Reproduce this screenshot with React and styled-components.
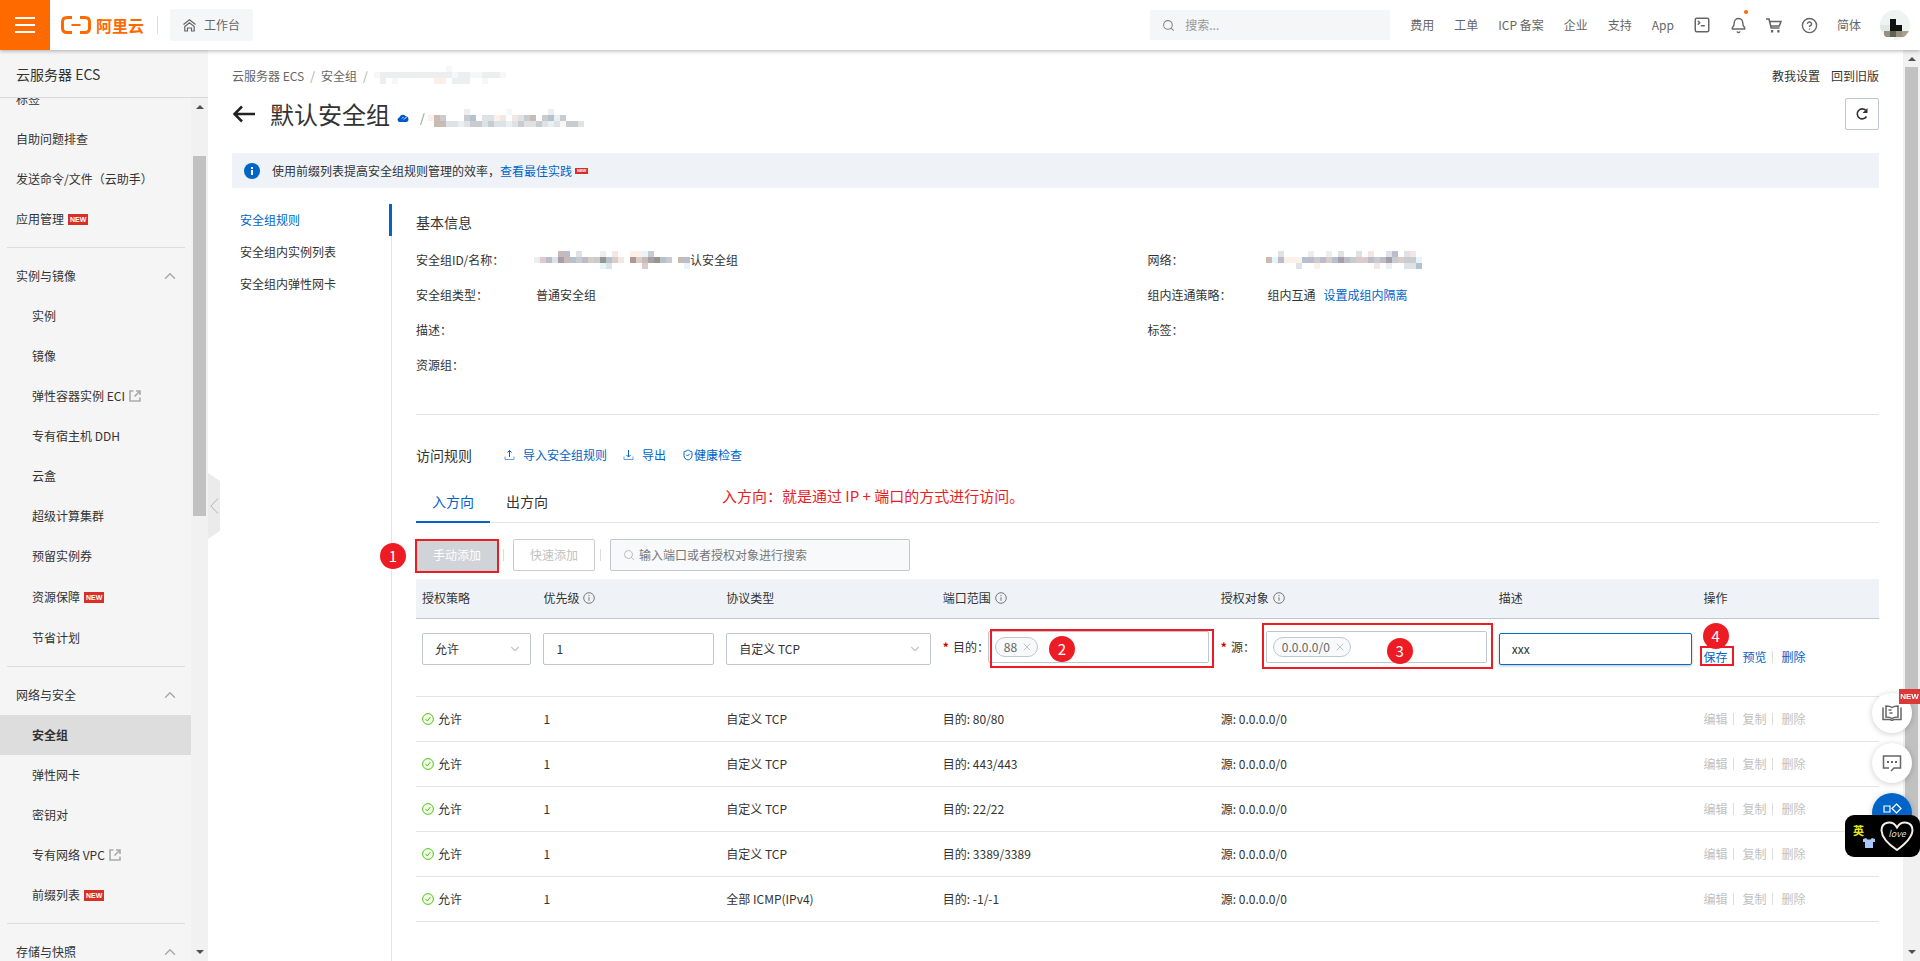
import { useState } from "react";
import styled, { createGlobalStyle } from "styled-components";
import {
  Bell,
  CircleHelp,
  Search,
  SquareTerminal,
  ChevronUp,
  ChevronDown,
  ShieldCheck,
  X,
} from "lucide-react";

const GlobalStyle = createGlobalStyle`
  * {
    box-sizing: border-box;
  }
  body {
    margin: 0;
    background-color: white;
    color: #333;
    font-family: "Noto Sans CJK SC", "Noto Sans", sans-serif;
    font-size: 12px;
    line-height: 20px;
  }
  a {
    color: inherit;
    text-decoration: none;
  }
  ul {
    list-style: none;
    margin: 0;
    padding: 0;
  }
  button, input, select {
    font: inherit;
    color: inherit;
    margin: 0;
  }
  button {
    cursor: pointer;
  }
  svg {
    display: block;
    flex: none;
  }
`;

const Page = styled.div`
  height: 100vh;
  display: flex;
  flex-direction: column;
  overflow: hidden;
`;

/* ---------- header ---------- */

const Header = styled.header`
  height: 50px;
  flex: none;
  display: flex;
  align-items: center;
  background-color: white;
  box-shadow: 0 1px 4px rgba(0, 0, 0, 0.3);
  z-index: 2;
`;

const MenuButton = styled.button`
  width: 50px;
  height: 50px;
  border: none;
  padding: 15px;
  background-color: #ff6a00;
`;

const Logo = styled.a`
  display: flex;
  align-items: center;
  gap: 5px;
  margin-left: 11px;
  color: #ff6a00;
  font-size: 16px;
  font-weight: 700;
`;

const HeaderDivider = styled.span`
  width: 1px;
  height: 18px;
  margin: 0 12px 0 13px;
  background-color: #ddd;
`;

const Workbench = styled.button`
  display: flex;
  align-items: center;
  gap: 8px;
  height: 32px;
  padding: 0 13px;
  border: none;
  border-radius: 2px;
  background-color: #f4f6f8;
  color: #666;
`;

const HeaderRight = styled.div`
  margin-left: auto;
  margin-right: 10px;
  display: flex;
  align-items: center;
  color: #666;
`;

const SearchBox = styled.label`
  display: flex;
  align-items: center;
  gap: 10px;
  width: 240px;
  height: 30px;
  padding: 0 12px;
  margin-right: 20px;
  background-color: #f4f6f8;
  color: #888;
`;

const PlainInput = styled.input`
  flex: 1;
  min-width: 0;
  border: none;
  padding: 0;
  outline: none;
  background: transparent;
  &::placeholder {
    color: ${(props) => props.$hint || "#999"};
    opacity: 1;
  }
`;

const HeaderNav = styled.nav`
  display: flex;
  align-items: center;
  gap: 19px;
`;

const TextLinks = styled.div`
  display: flex;
  gap: 20px;
`;

const IconLink = styled.a`
  position: relative;
  display: flex;
`;

const Dot = styled.span`
  position: absolute;
  top: -7px;
  right: -1px;
  width: 4px;
  height: 4px;
  border-radius: 50%;
  background-color: #ff6a00;
`;

const Avatar = styled.svg`
  width: 30px;
  height: 30px;
  border-radius: 50%;
`;

/* ---------- sidebar ---------- */

const Body = styled.div`
  flex: 1;
  min-height: 0;
  display: flex;
`;

const Sidebar = styled.aside`
  position: relative;
  width: 208px;
  flex: none;
  display: flex;
  flex-direction: column;
  background-color: #f5f5f5;
`;

const SidebarTitle = styled.h2`
  height: 48px;
  flex: none;
  margin: 0;
  padding: 14px 16px;
  border-bottom: 1px solid #d9d9d9;
  font-size: 14px;
  font-weight: 400;
`;

const SidebarScroll = styled.div`
  flex: 1;
  min-height: 0;
  display: flex;
`;

const MenuList = styled.nav`
  flex: 1;
  overflow: hidden;
`;

const MenuGroup = styled.ul`
  margin-bottom: 8px;
  &:first-child {
    margin-top: -19px;
  }
`;

const MenuItem = styled.a`
  display: flex;
  align-items: center;
  gap: 4px;
  height: ${(props) => (props.$tall ? "42px" : "40px")};
  padding-left: ${(props) => (props.$nested ? "32px" : "16px")};
  font-weight: ${(props) => (props.$active ? "700" : "400")};
  background-color: ${(props) => (props.$active ? "#ddd" : "transparent")};
`;

const GroupButton = styled.button`
  display: flex;
  align-items: center;
  justify-content: space-between;
  width: 100%;
  height: 40px;
  padding: 0 12px 0 16px;
  border: none;
  background: transparent;
`;

const MenuLine = styled.hr`
  height: 1px;
  margin: 0 6px 8px 7px;
  border: none;
  background-color: #ddd;
`;

const NewTag = styled.span`
  padding: 0 2px;
  background-color: #d93026;
  color: white;
  font-family: "Liberation Sans", sans-serif;
  font-size: ${(props) => (props.$mini ? "4px" : "7px")};
  font-weight: 700;
  line-height: ${(props) => (props.$mini ? "6px" : "11px")};
`;

const ScrollTrack = styled.div`
  width: 17px;
  flex: none;
  display: flex;
  flex-direction: column;
  align-items: center;
  padding: 7px 0;
  background-color: #f1f1f1;
`;

const ScrollArrow = styled.span`
  border: 4px solid transparent;
  border-top-width: ${(props) => (props.$up ? "0" : "4px")};
  border-bottom-width: ${(props) => (props.$up ? "4px" : "0")};
  border-top-color: #505050;
  border-bottom-color: #505050;
`;

const ScrollThumb = styled.span`
  width: 13px;
  margin-bottom: auto;
  background-color: #c1c1c1;
`;

const CollapseHandle = styled.button`
  position: absolute;
  left: 100%;
  top: 423px;
  width: 12px;
  height: 66px;
  padding: 0 2px;
  border: none;
  background-color: #ebebeb;
  clip-path: polygon(0 0, 100% 8px, 100% 58px, 0 100%);
`;

/* ---------- main ---------- */

const Main = styled.main`
  flex: 1;
  min-width: 0;
  display: flex;
  flex-direction: column;
  padding: 16px 24px 0;
  overflow: hidden;
`;

const TopLine = styled.div`
  display: flex;
  justify-content: space-between;
`;

const Breadcrumb = styled.nav`
  display: flex;
  gap: 6px;
  color: #666;
`;

const Slash = styled.span`
  color: #aaa;
`;

const TopLinks = styled.div`
  display: flex;
  gap: 11px;
`;

const TitleRow = styled.div`
  display: flex;
  align-items: center;
  height: 36px;
  margin-top: 10px;
`;

const BackLink = styled.a`
  margin-right: 14px;
`;

const Title = styled.h1`
  margin: 0;
  font-size: 24px;
  font-weight: 400;
  line-height: 36px;
`;

const TitleMeta = styled.div`
  display: flex;
  align-items: center;
  gap: 3px;
  padding-top: 8px;
  margin-left: 7px;
  color: #888;
`;

const MetaSlash = styled.span`
  margin-left: 8px;
`;

const RefreshButton = styled.button`
  display: flex;
  align-items: center;
  justify-content: center;
  width: 34px;
  height: 32px;
  margin-left: auto;
  padding: 0;
  border: 1px solid #c0c6cc;
  border-radius: 2px;
  background-color: white;
`;

const Notice = styled.div`
  display: flex;
  align-items: center;
  flex: none;
  height: 35px;
  margin-top: 21px;
  padding: 0 12px;
  background-color: #eff3f8;
`;

const NoticeText = styled.span`
  margin: 0 3px 0 12px;
`;

const BlueLink = styled.a`
  display: inline-flex;
  align-items: center;
  gap: ${(props) => props.$gap || "0"};
  color: #0064c8;
`;

const Content = styled.div`
  flex: 1;
  display: flex;
  padding-top: 16px;
`;

const SideTabs = styled.nav`
  width: 160px;
  flex: none;
  border-right: 1px solid #e3e4e6;
`;

const SideTab = styled.a`
  display: block;
  height: 32px;
  margin-right: -1px;
  padding: 7px 8px;
  line-height: 18px;
  color: ${(props) => (props.$active ? "#0064c8" : "#333")};
  border-right: ${(props) => props.$active && "3px solid #0064c8"};
`;

const Panel = styled.section`
  flex: 1;
  min-width: 0;
  padding: 8px 0 0 24px;
`;

const SectionTitle = styled.h3`
  margin: 0;
  font-size: 14px;
  font-weight: 400;
  line-height: 20px;
`;

const InfoGrid = styled.dl`
  display: grid;
  grid-template-columns: 1fr 1fr;
  grid-auto-rows: 35px;
  margin: 10px 0 32px;
  align-items: center;
`;

const InfoItem = styled.div`
  display: flex;
`;

const InfoLabel = styled.dt`
  width: 120px;
  flex: none;
`;

const InfoValue = styled.dd`
  display: flex;
  align-items: center;
  gap: 8px;
  margin: 0;
`;

const Redacted = styled.span`
  display: flex;
  align-items: center;
  margin-left: -2px;
`;

const RuleSection = styled.div`
  padding-top: 29px;
  border-top: 1px solid #e3e4e6;
`;

const RuleHead = styled.div`
  display: flex;
  align-items: center;
  height: 21px;
`;

const RuleLinks = styled.div`
  display: flex;
  gap: 16px;
  margin-left: 32px;
`;

const Tabs = styled.div`
  position: relative;
  display: flex;
  height: 42px;
  margin-top: 16px;
  border-bottom: 1px solid #e3e4e6;
`;

const Tab = styled.button`
  height: 42px;
  padding: 0 16px;
  border: none;
  border-bottom: 2px solid ${(props) => (props.$active ? "#0064c8" : "transparent")};
  background: transparent;
  color: ${(props) => (props.$active ? "#0064c8" : "#333")};
  font-size: 14px;
`;

const Toolbar = styled.div`
  display: flex;
  align-items: center;
  height: 56px;
  padding-top: 8px;
`;

const ToolButton = styled.button`
  width: 82px;
  height: 32px;
  padding: 0;
  border: 1px solid #c9ccd0;
  border-radius: 2px;
  background-color: ${(props) => (props.$filled ? "#d0d4d9" : "white")};
  color: ${(props) => (props.$filled ? "white" : "#c1c1c1")};
`;

const Bar = styled.span`
  width: 1px;
  height: 12px;
  margin: 0 9px 0 5px;
  background-color: #ddd;
`;

const FilterBox = styled.label`
  display: flex;
  align-items: center;
  gap: 4px;
  width: 300px;
  height: 32px;
  padding: 0 12px;
  border: 1px solid #c0c6cc;
  border-radius: 2px;
  background-color: #f7f9fa;
  color: #b8bcc0;
`;

/* ---------- rule table ---------- */

const Table = styled.table`
  width: 100%;
  table-layout: fixed;
  border-collapse: collapse;
`;

const Col = styled.col`
  width: ${(props) => props.$width};
`;

const Th = styled.th`
  height: 39px;
  padding: 0 6px;
  background-color: #eff3f8;
  border-bottom: 1px solid #c0c6cc;
  font-weight: 400;
  text-align: left;
`;

const Td = styled.td`
  height: 45px;
  padding: 0 6px;
  border-bottom: 1px solid #e3e4e6;
`;

const EditTd = styled.td`
  height: 78px;
  padding: ${(props) => props.$top || "14px"} 6px 0;
  border-bottom: 1px solid #e3e4e6;
  vertical-align: top;
`;

const Inline = styled.span`
  display: flex;
  align-items: center;
  gap: 4px;
`;

const TextField = styled.input`
  display: block;
  width: 100%;
  height: 32px;
  padding: 0 12px;
  border: 1px solid ${(props) => (props.$focused ? "#0070cc" : "#c0c6cc")};
  border-radius: 2px;
  outline: none;
  box-shadow: ${(props) => props.$focused && "0 1px 3px rgba(0, 0, 0, 0.25)"};
`;

const SelectWrap = styled.div`
  display: grid;
  align-items: center;
  > * {
    grid-area: 1 / 1;
  }
  > svg {
    justify-self: end;
    margin-right: 9px;
    color: #c0c6cc;
    pointer-events: none;
  }
`;

const SelectField = styled.select`
  appearance: none;
  width: 100%;
  height: 32px;
  padding: 0 12px;
  border: 1px solid #c0c6cc;
  border-radius: 2px;
  background-color: white;
`;

const FieldRow = styled.div`
  display: flex;
  align-items: center;
`;

const FieldLabel = styled.label`
  width: 45px;
  flex: none;
  white-space: nowrap;
  &::before {
    content: "*";
    margin-right: 4px;
    color: #c80000;
    font-weight: 700;
  }
`;

const TagField = styled.div`
  position: relative;
  flex: 1;
  min-width: 0;
  display: flex;
  align-items: center;
  gap: 6px;
  height: 32px;
  padding: 0 6px;
  border: 1px solid #c0c6cc;
  border-radius: 2px;
`;

const Tag = styled.span`
  display: flex;
  align-items: center;
  gap: 4px;
  height: 20px;
  padding: 0 4px 0 8px;
  border: 1px solid #c0c6cc;
  border-radius: 10px;
  background-color: #f7f9fa;
  color: #666;
`;

const TagClose = styled.button`
  display: flex;
  padding: 0;
  border: none;
  background: transparent;
  color: #c0c6cc;
`;

const Actions = styled.div`
  display: flex;
  align-items: center;
`;

const TextButton = styled.button`
  padding: 0;
  border: none;
  background: transparent;
  color: ${(props) => (props.disabled ? "#c1c1c1" : "#0064c8")};
`;

/* ---------- red marks over the controls ---------- */

const Marked = styled.div`
  position: relative;
  display: flex;
  margin-right: ${(props) => props.$gap || "0"};
`;

const MarkFrame = styled.span`
  position: absolute;
  inset: ${(props) => props.$inset};
  border: 2px solid #ed1c24;
  pointer-events: none;
`;

const MarkNumber = styled.span`
  position: absolute;
  left: ${(props) => props.$left};
  top: ${(props) => props.$top};
  width: 26px;
  height: 26px;
  border-radius: 50%;
  background-color: #ed1c24;
  color: white;
  font-size: 15px;
  line-height: 26px;
  text-align: center;
  pointer-events: none;
`;

const MarkText = styled.span`
  position: absolute;
  left: 306px;
  top: 5px;
  color: #ed1c24;
  font-size: 15px;
  white-space: nowrap;
`;

/* ---------- floating tools ---------- */

const FloatStack = styled.div`
  position: fixed;
  right: 8px;
  bottom: 128px;
  display: flex;
  flex-direction: column;
  gap: 10px;
  z-index: 3;
`;

const FloatButton = styled.button`
  position: relative;
  display: flex;
  align-items: center;
  justify-content: center;
  width: 40px;
  height: 40px;
  padding: 0;
  border: none;
  border-radius: 50%;
  background-color: ${(props) => (props.$blue ? "#0064c8" : "white")};
  color: ${(props) => (props.$blue ? "white" : "#666")};
  box-shadow: 0 1px 6px rgba(0, 0, 0, 0.2);
`;

const FloatNew = styled.span`
  position: absolute;
  top: -4px;
  right: -8px;
  width: 21px;
  background-color: #d83a3a;
  color: white;
  font-family: "Liberation Sans", sans-serif;
  font-size: 8px;
  font-weight: 700;
  line-height: 15px;
`;

const ImeBar = styled.div`
  position: fixed;
  right: 0;
  bottom: 104px;
  display: flex;
  align-items: center;
  justify-content: space-between;
  width: 75px;
  height: 42px;
  padding: 0 6px 0 8px;
  border-radius: 9px;
  background-color: black;
  z-index: 4;
`;

const ImeMode = styled.div`
  display: flex;
  flex-direction: column;
  color: #e6e619;
  font-size: 11px;
  font-weight: 700;
  line-height: 13px;
  > svg {
    margin-left: 10px;
  }
`;

const menu = [
  {
    items: [
      { label: "标签" },
      { label: "自助问题排查" },
      { label: "发送命令/文件（云助手）" },
      { label: "应用管理", isNew: true },
    ],
  },
  {
    title: "实例与镜像",
    items: [
      { label: "实例" },
      { label: "镜像" },
      { label: "弹性容器实例 ECI", external: true },
      { label: "专有宿主机 DDH" },
      { label: "云盒" },
      { label: "超级计算集群" },
      { label: "预留实例券" },
      { label: "资源保障", isNew: true, tall: true },
      { label: "节省计划" },
    ],
  },
  {
    title: "网络与安全",
    items: [
      { label: "安全组", active: true },
      { label: "弹性网卡" },
      { label: "密钥对" },
      { label: "专有网络 VPC", external: true },
      { label: "前缀列表", isNew: true },
    ],
  },
  { title: "存储与快照", items: [] },
];

const rules = [
  { protocol: "自定义 TCP", port: "80/80" },
  { protocol: "自定义 TCP", port: "443/443" },
  { protocol: "自定义 TCP", port: "22/22" },
  { protocol: "自定义 TCP", port: "3389/3389" },
  { protocol: "全部 ICMP(IPv4)", port: "-1/-1" },
];

const columns = [
  { label: "授权策略", width: "8.3%" },
  { label: "优先级", width: "12.5%", info: true },
  { label: "协议类型", width: "14.8%" },
  { label: "端口范围", width: "19%", info: true },
  { label: "授权对象", width: "19%", info: true },
  { label: "描述", width: "14%" },
  { label: "操作", width: "12.4%" },
];

// one letter per 6px block, "." is empty
const shades = {
  a: "#f7f7f7",
  b: "#eceeef",
  c: "#dde2e6",
  d: "#c8cccf",
  e: "#fbf1e9",
  f: "#c9bab4",
  g: "#a3a0ac",
  h: "#e6f4fc",
  i: "#b4c2cf",
  j: "#98968a",
  k: "#dccbcb",
  l: "#bcbccd",
  m: "#f4e6e2",
  n: "#b39691",
};

const mosaics = {
  crumb: ["............a.........", "abbbbbbbbbbbbabbaabbba", ".b.a......ee.bbb..a..."],
  title: ["......b......a......b.....", "efd...di.ccem.mcdf.dibd...", ".ffccbcddcdccbcdccdcbcaddc"],
  id: ["....fl.c...b.m..eehd......", "bklcgfidlkdjikm.nkfgjid.fl", "...........hc.....k......h"],
  network: ["..c....b..b.c..c.m..cl.cm.", "fhleeeildlkigldkkldlgdkddh", ".....c..e.........m.b..cci"],
};

const Mosaic = ({ name }) => (
  <svg width="156" height="18" shapeRendering="crispEdges" aria-hidden="true">
    {mosaics[name].map((line, row) =>
      [...line].map(
        (key, col) =>
          shades[key] && (
            <rect
              key={`${row}-${col}`}
              x={col * 6}
              y={row * 6}
              width="6"
              height="6"
              fill={shades[key]}
            />
          )
      )
    )}
  </svg>
);

const InfoIcon = () => (
  <svg width="12" height="12" viewBox="0 0 12 12" fill="none" stroke="#777">
    <circle cx="6" cy="6" r="5.3" />
    <path d="M6 5.2v3.6M6 3v1.2" />
  </svg>
);

const AllowIcon = () => (
  <svg width="12" height="12" viewBox="0 0 12 12" fill="none" stroke="#52c41a">
    <circle cx="6" cy="6" r="5.4" fill="#f2fbea" />
    <path d="M3.6 6l1.7 2 3.1-4" />
  </svg>
);

const ExternalIcon = () => (
  <svg width="12" height="12" viewBox="0 0 12 12" fill="none" stroke="#aaa" strokeWidth="1.6">
    <path d="M4.5 1H1v10h10V7.5M7 1h4v4M11 1L5.5 6.5" />
  </svg>
);

const TransferIcon = ({ down }) => (
  <svg width="11" height="11" viewBox="0 0 11 11" fill="none" stroke="#0064c8">
    <path d="M1 7.5v3h9v-3" opacity="0.6" />
    <path d={down ? "M5.5 1v7M3.5 6l2 2 2-2" : "M5.5 8V1.500M3.5 3.500l2-2 2 2"} />
  </svg>
);

const Scrollbar = ({ thumb, gap }) => (
  <ScrollTrack aria-hidden="true">
    <ScrollArrow $up />
    <ScrollThumb style={{ height: thumb, marginTop: gap }} />
    <ScrollArrow />
  </ScrollTrack>
);

const App = () => {
  const [priority, setPriority] = useState("1");
  const [desc, setDesc] = useState("xxx");

  return (
    <Page>
      <GlobalStyle />
      <Header>
        <MenuButton aria-label="菜单">
          <svg width="20" height="20" stroke="white" strokeWidth="2">
            <path d="M0 3h20M0 10h20M0 17h20" />
          </svg>
        </MenuButton>
        <Logo href="#">
          <svg width="30" height="18" viewBox="0 0 30 18" fill="none" stroke="#ff6a00" strokeWidth="3">
            <path d="M11 1.5H6Q1.5 1.5 1.5 6v6q0 4.500 4.500 4.500h5M19 1.500h5q4.500 0 4.500 4.500v6q0 4.500-4.500 4.500h-5" />
            <path d="M10.500 9h9" strokeWidth="2" />
          </svg>
          阿里云
        </Logo>
        <HeaderDivider />
        <Workbench>
          <svg width="13" height="13" viewBox="0 0 13 13" fill="none" stroke="#666" strokeWidth="1.200">
            <path d="M.5 5.500l6-4.700 6 4.700" />
            <path d="M1.800 7.500l4.700-3.700 4.700 3.700V12H8.500V9h-4v3H1.800z" />
          </svg>
          工作台
        </Workbench>
        <HeaderRight>
          <SearchBox>
            <Search size={13} strokeWidth={2} />
            <PlainInput placeholder="搜索..." aria-label="搜索" />
          </SearchBox>
          <HeaderNav>
            <TextLinks>
              <a href="#">费用</a>
              <a href="#">工单</a>
              <a href="#">ICP 备案</a>
              <a href="#">企业</a>
              <a href="#">支持</a>
              <a href="#">App</a>
            </TextLinks>
            <IconLink href="#" aria-label="终端">
              <SquareTerminal size={18} strokeWidth={2} />
            </IconLink>
            <IconLink href="#" aria-label="消息">
              <Bell size={17} strokeWidth={2} />
              <Dot />
            </IconLink>
            <IconLink href="#" aria-label="购物车">
              <svg width="16" height="16" viewBox="0 0 16 16" fill="none" stroke="#666" strokeWidth="1.600">
                <path d="M0 2h3l2.200 9h8.300M3.600 4.500H15L13.300 9H5" />
                <path d="M5 14.200h2.200M11.300 14.200h2.200" strokeWidth="2.400" />
              </svg>
            </IconLink>
            <IconLink href="#" aria-label="帮助">
              <CircleHelp size={17} strokeWidth={2} />
            </IconLink>
            <a href="#">简体</a>
            <Avatar viewBox="0 0 30 30" shapeRendering="crispEdges">
              <path fill="#edf4f1" d="M0 0h30v30H0z" />
              <path fill="#10130f" d="M10 9h6v6h6v6H10z" />
              <path fill="#97907e" d="M4 21h6v6H4zM16 21h6v6h-6z" />
              <path fill="#5e6356" d="M10 21h6v6h-6z" />
              <path fill="#aaa18c" d="M22 21h7v6h-7z" />
              <path fill="#dfe9e3" d="M0 15h10v6H0z" />
              <path fill="white" d="M0 27h14v3H0z" />
            </Avatar>
          </HeaderNav>
        </HeaderRight>
      </Header>

      <Body>
        <Sidebar>
          <SidebarTitle>云服务器 ECS</SidebarTitle>
          <SidebarScroll>
            <MenuList>
              {menu.map((group, i) => (
                <div key={i}>
                  {group.title && (
                    <>
                      <MenuLine />
                      <GroupButton>
                        {group.title}
                        <ChevronUp size={18} strokeWidth={2} color="#aaa" />
                      </GroupButton>
                    </>
                  )}
                  <MenuGroup>
                    {group.items.map((item) => (
                      <li key={item.label}>
                        <MenuItem
                          href="#"
                          $nested={!!group.title}
                          $active={item.active}
                          $tall={item.tall}
                        >
                          {item.label}
                          {item.external && <ExternalIcon />}
                          {item.isNew && <NewTag>NEW</NewTag>}
                        </MenuItem>
                      </li>
                    ))}
                  </MenuGroup>
                </div>
              ))}
            </MenuList>
            <Scrollbar thumb="360px" gap="47px" />
          </SidebarScroll>
          <CollapseHandle aria-label="收起">
            <svg width="9" height="16" viewBox="0 0 9 16" fill="none" stroke="#b4b4b4">
              <path d="M8 .5L.8 8 8 15.500" />
            </svg>
          </CollapseHandle>
        </Sidebar>

        <Main>
          <TopLine>
            <Breadcrumb>
              <a href="#">云服务器 ECS</a>
              <Slash>/</Slash>
              <a href="#">安全组</a>
              <Slash>/</Slash>
              <Mosaic name="crumb" />
            </Breadcrumb>
            <TopLinks>
              <a href="#">教我设置</a>
              <a href="#">回到旧版</a>
            </TopLinks>
          </TopLine>

          <TitleRow>
            <BackLink href="#" aria-label="返回">
              <svg width="24" height="18" viewBox="0 0 24 18" fill="none" stroke="#222" strokeWidth="2.500">
                <path d="M23 9H3M10 1.500L2.500 9l7.500 7.500" />
              </svg>
            </BackLink>
            <Title>默认安全组</Title>
            <TitleMeta>
              <svg width="12" height="8" viewBox="0 0 12 8" fill="#0058c8">
                <path d="M2.500 8a2.300 2.300 0 0 1-.2-4.500A3.800 3.800 0 0 1 9 2.200 3 3 0 0 1 9.500 8z" />
                <path d="M7 5.500L9.500 3M5 4.500l1.500-1.500" stroke="white" />
              </svg>
              <MetaSlash>/</MetaSlash>
              <Mosaic name="title" />
            </TitleMeta>
            <RefreshButton aria-label="刷新">
              <svg width="14" height="14" viewBox="0 0 14 14" fill="none" stroke="#333" strokeWidth="1.600">
                <path d="M11.500 9.500A5 5 0 1 1 11 3.500" />
                <path d="M12.500 1v5h-5z" fill="#333" stroke="none" />
              </svg>
            </RefreshButton>
          </TitleRow>

          <Notice>
            <svg width="16" height="16" viewBox="0 0 16 16">
              <circle cx="8" cy="8" r="8" fill="#0064c8" />
              <path d="M7 7h2v5H7zM7 4h2v2H7z" fill="white" />
            </svg>
            <NoticeText>
              使用前缀列表提高安全组规则管理的效率，<BlueLink href="#">查看最佳实践</BlueLink>
            </NoticeText>
            <NewTag $mini>NEW</NewTag>
          </Notice>

          <Content>
            <SideTabs>
              <SideTab href="#" $active>安全组规则</SideTab>
              <SideTab href="#">安全组内实例列表</SideTab>
              <SideTab href="#">安全组内弹性网卡</SideTab>
            </SideTabs>

            <Panel>
              <SectionTitle>基本信息</SectionTitle>
              <InfoGrid>
                <InfoItem>
                  <InfoLabel>安全组ID/名称：</InfoLabel>
                  <InfoValue>
                    <Redacted>
                      <Mosaic name="id" />
                      认安全组
                    </Redacted>
                  </InfoValue>
                </InfoItem>
                <InfoItem>
                  <InfoLabel>网络：</InfoLabel>
                  <InfoValue>
                    <Redacted>
                      <Mosaic name="network" />
                    </Redacted>
                  </InfoValue>
                </InfoItem>
                <InfoItem>
                  <InfoLabel>安全组类型：</InfoLabel>
                  <InfoValue>普通安全组</InfoValue>
                </InfoItem>
                <InfoItem>
                  <InfoLabel>组内连通策略：</InfoLabel>
                  <InfoValue>
                    组内互通
                    <BlueLink href="#">设置成组内隔离</BlueLink>
                  </InfoValue>
                </InfoItem>
                <InfoItem>
                  <InfoLabel>描述：</InfoLabel>
                </InfoItem>
                <InfoItem>
                  <InfoLabel>标签：</InfoLabel>
                </InfoItem>
                <InfoItem>
                  <InfoLabel>资源组：</InfoLabel>
                </InfoItem>
              </InfoGrid>

              <RuleSection>
                <RuleHead>
                  <SectionTitle as="h2">访问规则</SectionTitle>
                  <RuleLinks>
                    <BlueLink href="#" $gap="8px">
                      <TransferIcon />
                      导入安全组规则
                    </BlueLink>
                    <BlueLink href="#" $gap="8px">
                      <TransferIcon down />
                      导出
                    </BlueLink>
                    <BlueLink href="#">
                      <ShieldCheck size={12} strokeWidth={2} />
                      健康检查
                    </BlueLink>
                  </RuleLinks>
                </RuleHead>

                <Tabs role="tablist">
                  <Tab role="tab" aria-selected="true" $active>入方向</Tab>
                  <Tab role="tab" aria-selected="false">出方向</Tab>
                  <MarkText>入方向：就是通过 IP + 端口的方式进行访问。</MarkText>
                </Tabs>

                <Toolbar>
                  <Marked>
                    <ToolButton $filled disabled>手动添加</ToolButton>
                    <MarkFrame $inset="0 -1px -2px -1px" />
                    <MarkNumber $left="-36px" $top="4px">1</MarkNumber>
                  </Marked>
                  <Bar />
                  <ToolButton disabled>快速添加</ToolButton>
                  <Bar />
                  <FilterBox>
                    <Search size={12} strokeWidth={2} />
                    <PlainInput
                      $hint="#777"
                      placeholder="输入端口或者授权对象进行搜索"
                      aria-label="输入端口或者授权对象进行搜索"
                    />
                  </FilterBox>
                </Toolbar>

                <Table>
                  <colgroup>
                    {columns.map((column) => (
                      <Col key={column.label} $width={column.width} />
                    ))}
                  </colgroup>
                  <thead>
                    <tr>
                      {columns.map((column) => (
                        <Th key={column.label}>
                          <Inline>
                            {column.label}
                            {column.info && <InfoIcon />}
                          </Inline>
                        </Th>
                      ))}
                    </tr>
                  </thead>
                  <tbody>
                    <tr>
                      <EditTd>
                        <SelectWrap>
                          <SelectField aria-label="授权策略">
                            <option>允许</option>
                            <option>拒绝</option>
                          </SelectField>
                          <ChevronDown size={14} strokeWidth={2} />
                        </SelectWrap>
                      </EditTd>
                      <EditTd>
                        <TextField
                          aria-label="优先级"
                          value={priority}
                          onChange={(e) => setPriority(e.target.value)}
                        />
                      </EditTd>
                      <EditTd>
                        <SelectWrap>
                          <SelectField aria-label="协议类型">
                            <option>自定义 TCP</option>
                            <option>全部 ICMP(IPv4)</option>
                          </SelectField>
                          <ChevronDown size={14} strokeWidth={2} />
                        </SelectWrap>
                      </EditTd>
                      <EditTd $top="12px">
                        <FieldRow>
                          <FieldLabel htmlFor="port">目的：</FieldLabel>
                          <TagField>
                            <Tag>
                              88
                              <TagClose aria-label="移除 88"><X size={12} strokeWidth={2} /></TagClose>
                            </Tag>
                            <PlainInput id="port" />
                            <MarkFrame $inset="-3px -6px -6px 1px" />
                            <MarkNumber $left="60px" $top="4px">2</MarkNumber>
                          </TagField>
                        </FieldRow>
                      </EditTd>
                      <EditTd $top="12px">
                        <FieldRow>
                          <FieldLabel htmlFor="source">源：</FieldLabel>
                          <TagField>
                            <Tag>
                              0.0.0.0/0
                              <TagClose aria-label="移除 0.0.0.0/0"><X size={12} strokeWidth={2} /></TagClose>
                            </Tag>
                            <PlainInput id="source" />
                            <MarkFrame $inset="-9px -7px -7px -5px" />
                            <MarkNumber $left="120px" $top="6px">3</MarkNumber>
                          </TagField>
                        </FieldRow>
                      </EditTd>
                      <EditTd>
                        <TextField
                          $focused
                          aria-label="描述"
                          value={desc}
                          onChange={(e) => setDesc(e.target.value)}
                        />
                      </EditTd>
                      <EditTd $top="28px">
                        <Actions>
                          <Marked $gap="15px">
                            <MarkNumber $left="-1px" $top="-24px">4</MarkNumber>
                            <TextButton>保存</TextButton>
                            <MarkFrame $inset="-1px -6px 1px -4px" />
                          </Marked>
                          <TextButton>预览</TextButton>
                          <Bar />
                          <TextButton>删除</TextButton>
                        </Actions>
                      </EditTd>
                    </tr>
                    {rules.map((rule) => (
                      <tr key={rule.port}>
                        <Td>
                          <Inline>
                            <AllowIcon />
                            允许
                          </Inline>
                        </Td>
                        <Td>1</Td>
                        <Td>{rule.protocol}</Td>
                        <Td>目的: {rule.port}</Td>
                        <Td>源: 0.0.0.0/0</Td>
                        <Td />
                        <Td>
                          <Actions>
                            <TextButton disabled>编辑</TextButton>
                            <Bar />
                            <TextButton disabled>复制</TextButton>
                            <Bar />
                            <TextButton disabled>删除</TextButton>
                          </Actions>
                        </Td>
                      </tr>
                    ))}
                  </tbody>
                </Table>
              </RuleSection>
            </Panel>
          </Content>
        </Main>
        <Scrollbar thumb="768px" gap="6px" />
      </Body>

      <FloatStack>
        <FloatButton aria-label="文档">
          <svg width="20" height="16" viewBox="0 0 20 16" fill="none" stroke="#666" strokeWidth="1.500">
            <path d="M10 2.500Q8 1 4 1v11q4 0 6 1.500Q12 12 16 12V1q-4 0-6 1.500z" />
            <path d="M1 2.500v12h7l2 1 2-1h7v-12M6.500 5h3M7.500 8h3" />
          </svg>
          <FloatNew>NEW</FloatNew>
        </FloatButton>
        <FloatButton aria-label="咨询">
          <svg width="20" height="18" viewBox="0 0 20 18" fill="none" stroke="#666" strokeWidth="1.500">
            <path d="M7 14H1.500V2h17v12H12l-3 3" />
            <path d="M5 8h2M9 8h2M13 8h2" strokeWidth="2" />
          </svg>
        </FloatButton>
        <FloatButton $blue aria-label="工具">
          <svg width="20" height="20" viewBox="0 0 20 20" fill="none" stroke="white" strokeWidth="1.200">
            <path d="M2 3h6v6H2zM14.500 1l4.500 4.500-4.500 4.500L10 5.500zM2 12.500h6v6H2zM11.500 12.500h6v6h-6z" />
          </svg>
        </FloatButton>
      </FloatStack>

      <ImeBar>
        <ImeMode>
          英
          <svg width="12" height="11" viewBox="0 0 12 11" fill="#a9c8f5">
            <path d="M3 1l1.500 1.500h3L9 1l3 1v3h-2v6H2V5H0V2z" />
          </svg>
        </ImeMode>
        <svg width="34" height="30" viewBox="0 0 34 30" fill="none" stroke="#f4efe6" strokeWidth="2">
          <path d="M17 29Q2 19 1.500 9.500C1.500 1 12 -1.500 17 6.500 22 -1.500 32.500 1 32.500 9.500 32 19 17 29 17 29z" />
          <text x="17" y="16" fill="#ddd" stroke="none" fontSize="9" fontStyle="italic" textAnchor="middle">
            love
          </text>
        </svg>
      </ImeBar>
    </Page>
  );
};

export default App;
